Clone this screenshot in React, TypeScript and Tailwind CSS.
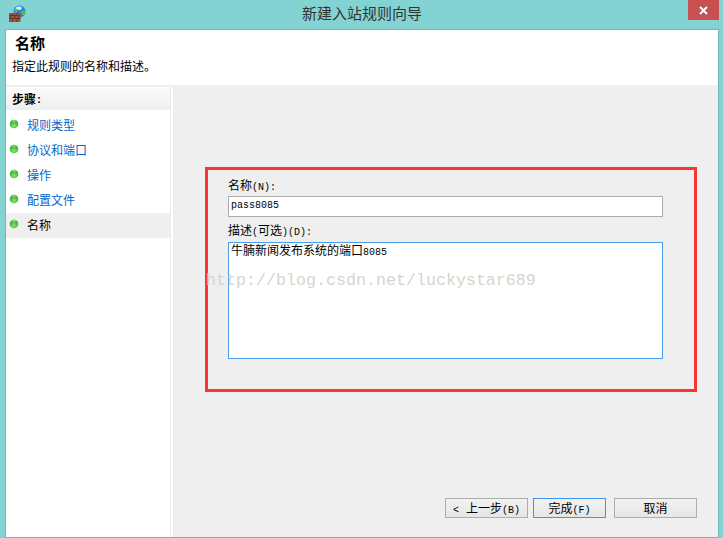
import React from "react";

const FONT = "[font-family:'Liberation_Mono','Noto_Sans_CJK_SC',monospace]";

function Bullet() {
  return (
    <svg width="10" height="10" viewBox="0 0 10 10" className="shrink-0">
      <defs>
        <radialGradient id="g" cx="0.5" cy="0.7" r="0.6">
          <stop offset="0" stopColor="#8fe36f" />
          <stop offset="0.6" stopColor="#52c440" />
          <stop offset="1" stopColor="#3aa635" />
        </radialGradient>
      </defs>
      <circle cx="5" cy="5" r="4.3" fill="url(#g)" />
      <ellipse cx="5" cy="2" rx="2" ry="1" fill="#b9dcb0" opacity="0.7" />
    </svg>
  );
}

function AppIcon() {
  return (
    <svg width="17" height="17" viewBox="0 0 17 17" className="shrink-0">
      <circle cx="10.500" cy="6.500" r="6" fill="#2f7fd0" />
      <path d="M7 2.500c2-1.500 5-1 6 .5l-1.500 2-3-.5-1 2.500L6 6z" fill="#dff3f5" />
      <path d="M12 6l3.500-.5.800 2.500-1.800 2.500-2-1.500z" fill="#4fc04a" />
      <path d="M7 3.500l2 1-1 2H5.500z" fill="#58c24f" />
      <rect x="0" y="8" width="11.500" height="9" fill="#a2543f" />
      <path d="M0 10.500h11.500M0 13.500h11.500M3.500 8v2.500M8 8v2.500M1.500 10.500v3M6 10.500v3M10 10.500v3M3.500 13.500V17M8 13.500V17" stroke="#5e2e24" strokeWidth="0.8" fill="none" />
    </svg>
  );
}

function L({ children }: { children: React.ReactNode }) {
  return <span className="text-[10px]">{children}</span>;
}

function Step({ label, active }: { label: string; active?: boolean }) {
  return (
    <div className={`flex h-[25px] items-center gap-[8px] pl-[3px] text-[12px] ${active ? "bg-[#efefef] text-black" : "text-[#0066cc]"}`}>
      <span className="-mt-[3px] flex"><Bullet /></span>
      <span className="pt-[2px]">{label}</span>
    </div>
  );
}

function Btn({ w, focus, children }: { w: string; focus?: boolean; children: React.ReactNode }) {
  return (
    <button className={`flex h-[20px] items-center justify-center border bg-gradient-to-b from-[#f2f2f2] to-[#e6e6e6] pt-[4px] text-[12px] leading-[14px] text-black ${w} ${focus ? "border-[#3c97ec]" : "border-[#adadad]"}`}>
      <span>{children}</span>
    </button>
  );
}

export default function App() {
  return (
    <div className={`relative flex h-[538px] w-[723px] flex-col overflow-hidden bg-[#83d3d3] ${FONT}`}>
      <div className="flex h-[29px] shrink-0 items-start">
        <div className="ml-[9px] mt-[5px]"><AppIcon /></div>
        <div className="flex-1 pl-[10px] pt-[7px] text-center text-[15px] leading-[18px] text-[#333333]">新建入站规则向导</div>
        <div className="mr-[4px] flex h-[20px] w-[31px] items-center justify-center bg-[#c75050]">
          <svg width="9" height="9" viewBox="0 0 9 9"><path d="M1 1l7 7M8 1L1 8" stroke="#fff" strokeWidth="2" /></svg>
        </div>
      </div>

      <div className="ml-[5px] mr-[4px] flex min-h-0 flex-1 flex-col border border-[#6fb9b8] bg-white">
        <div className="flex h-[55px] shrink-0 flex-col pl-[6px]">
          <div className="pl-[3px] pt-[7px] text-[15px] font-bold leading-[18px] text-black">名称</div>
          <div className="mt-[5px] text-[12px] leading-[16px] text-black">指定此规则的名称和描述。</div>
        </div>
        <div className="h-[2px] shrink-0 bg-[#efefef]" />
        <div className="flex min-h-0 flex-1">
          <div className="flex w-[167px] shrink-0 flex-col pr-[2px]">
            <div className="flex flex-1 flex-col border-r border-[#ececec]">
              <div className="mt-[1px] flex h-[22px] items-center bg-gradient-to-b from-[#fbfbfb] to-[#eeeeee] pl-[6px] pt-[3px] text-[12px] font-bold text-black">步骤<L>:</L></div>
              <div className="mt-[3px]">
                <Step label="规则类型" />
                <Step label="协议和端口" />
                <Step label="操作" />
                <Step label="配置文件" />
                <Step label="名称" active />
              </div>
            </div>
          </div>
          <div className="flex min-w-0 flex-1 flex-col bg-[#efefef] pl-[32px] pr-[21px]">
            <div className="mt-[80px] flex h-[225px] flex-col border-[3px] border-[#f93535] pl-[20px] pr-[31px] pt-[9px]">
              <label className="h-[17px] text-[12px] leading-[16px] text-black">名称<L>(N):</L></label>
              <input readOnly value="pass8085" className={`h-[21px] w-full border border-[#acacac] bg-white pb-[2px] pl-[2px] text-[10px] text-black outline-none ${FONT}`} />
              <label className="mt-[6px] h-[19px] text-[12px] leading-[18px] text-black">描述<L>(</L>可选<L>)(D):</L></label>
              <div className="h-[117px] w-full border border-[#4c9ee8] bg-white pl-[2px] text-[12px] leading-[18px] text-black">牛腩新闻发布系统的端口<L>8085</L></div>
            </div>
            <div className="mt-[106px] flex justify-end">
              <Btn w="w-[83px]"><L>&lt;</L> 上一步<L>(B)</L></Btn>
              <div className="w-[5px]" />
              <Btn w="w-[73px]" focus>完成<L>(F)</L></Btn>
              <div className="w-[8px]" />
              <Btn w="w-[83px]">取消</Btn>
            </div>
          </div>
        </div>
      </div>

      <div className="pointer-events-none absolute left-[206px] top-[270px] whitespace-nowrap text-[16.67px] leading-[22px] text-[#d6d5cd]">http://blog.csdn.net/luckystar689</div>
    </div>
  );
}
